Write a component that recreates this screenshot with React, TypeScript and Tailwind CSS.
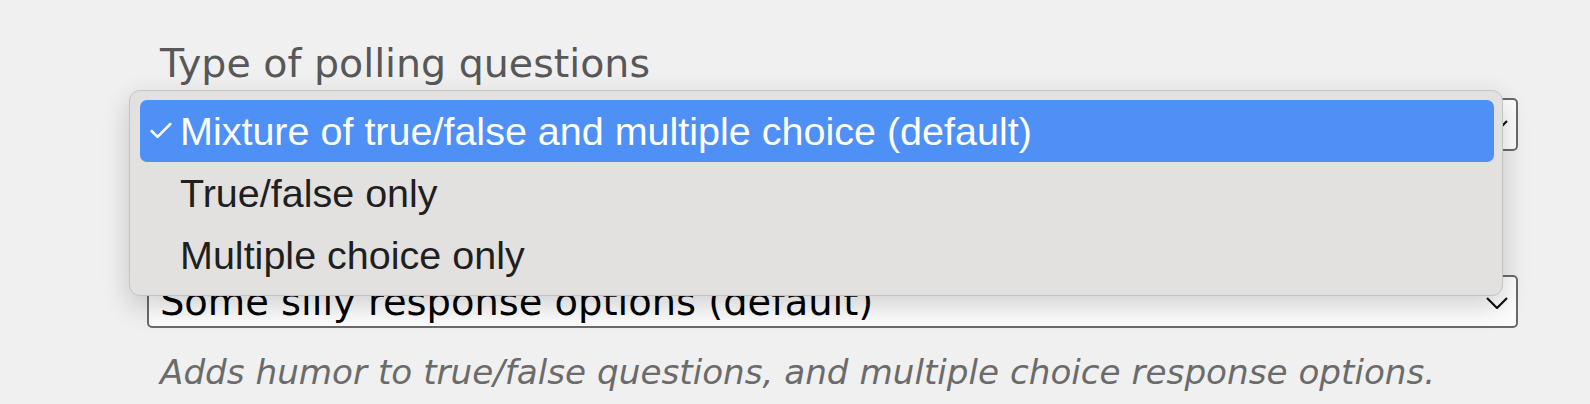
import { Check } from 'lucide-react'

const options = [
  'Mixture of true/false and multiple choice (default)',
  'True/false only',
  'Multiple choice only',
]

function Chevron() {
  return (
    <svg width="22" height="12" viewBox="0 0 22 12" className="shrink-0 mt-[3px]">
      <path d="M1 1 L11 11 L21 1" fill="none" stroke="#111" strokeWidth="2.2" />
    </svg>
  )
}

function SelectBox({ value }: { value: string }) {
  return (
    <div className="ml-[147px] w-[1371px] h-[53px] flex items-center justify-between border-2 border-[#6a6a6a] rounded-[5px] bg-[#fdfdfd] pl-[11px] pr-[8px]">
      <span className="text-[38.4px] leading-[44px] text-black whitespace-nowrap">{value}</span>
      <Chevron />
    </div>
  )
}

export default function App() {
  return (
    <main className="relative w-[1590px] h-[404px] overflow-hidden bg-[#f0f0f0] font-['DejaVu_Sans',sans-serif]">
      <div className="pt-[40px]">
        <p className="pl-[160px] text-[39.5px] leading-[46px] text-[#585858]">Type of polling questions</p>
        <div className="mt-[12px]">
          <SelectBox value={options[0]} />
        </div>
        <div className="mt-[124px]">
          <SelectBox value="Some silly response options (default)" />
        </div>
        <p className="mt-[24px] pl-[160px] text-[34.2px] leading-[40px] italic text-[#6b6b6b] whitespace-nowrap">
          Adds humor to true/false questions, and multiple choice response options.
        </p>
      </div>

      {/* open menu of the first select */}
      <div className="absolute left-[129px] top-[90px] w-[1374px] h-[206px] rounded-[11px] border border-[#c4c4c4] bg-[#e2e1df] pt-[9px] pl-[10px] pr-[8px] shadow-[0_10px_28px_rgba(0,0,0,0.18)] font-['Liberation_Sans',sans-serif]">
        {options.map((o, i) => (
          <div
            key={o}
            className={
              i === 0
                ? 'flex items-center h-[62px] rounded-[7px] bg-[#4f90f6] text-white'
                : 'flex items-center h-[62px] text-[#1f1f1f]'
            }
          >
            <span className="w-[40px] flex justify-center pl-[1px]">
              {i === 0 && <Check size={28} strokeWidth={2.2} />}
            </span>
            <span className="text-[39.5px] leading-[62px] whitespace-nowrap">{o}</span>
          </div>
        ))}
      </div>
    </main>
  )
}
